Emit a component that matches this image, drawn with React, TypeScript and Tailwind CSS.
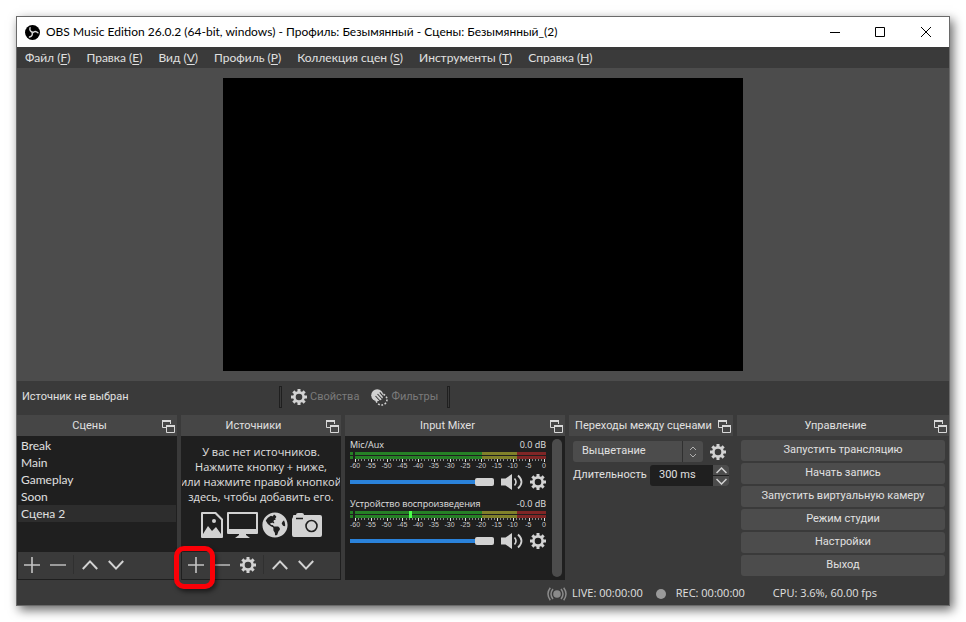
import { useState } from 'react';
import type { ReactNode } from 'react';
import { FaGlobeAmericas } from 'react-icons/fa';

const menu = [
  ['Файл', 'F'],
  ['Правка', 'E'],
  ['Вид', 'V'],
  ['Профиль', 'P'],
  ['Коллекция сцен', 'S'],
  ['Инструменты', 'T'],
  ['Справка', 'H'],
];

const scenes = ['Break', 'Main', 'Gameplay', 'Soon', 'Сцена 2'];

const controls = [
  'Запустить трансляцию',
  'Начать запись',
  'Запустить виртуальную камеру',
  'Режим студии',
  'Настройки',
  'Выход',
];

const decibels = [-60, -55, -50, -45, -40, -35, -30, -25, -20, -15, -10, -5, 0];

const ObsIcon = () => (
  <svg viewBox="0 0 16 16" className="size-[15px]" fill="none">
    <circle cx="8" cy="8" r="8" fill="black" />
    {[0, 120, 240].map((angle) => (
      <path
        key={angle}
        d="M8.200 7.600Q4.400 6.800 5.400 2.800"
        stroke="#d8d8d8"
        strokeWidth="1.500"
        strokeLinecap="round"
        transform={`rotate(${angle} 8 8)`}
      />
    ))}
  </svg>
);

const GearIcon = () => (
  <svg viewBox="0 0 16 16" className="size-4 shrink-0" fill="none" stroke="#d2d2d2">
    <circle cx="8" cy="8" r="4.6" strokeWidth="2.6" />
    {[0, 45, 90, 135, 180, 225, 270, 315].map((angle) => (
      <path key={angle} d="M8 0v3" strokeWidth="3" transform={`rotate(${angle} 8 8)`} />
    ))}
  </svg>
);

const PlusIcon = () => (
  <svg viewBox="0 0 16 16" className="size-4" stroke="#c4c4c4" strokeWidth="1.6">
    <path d="M8 0v16M0 8h16" />
  </svg>
);

const MinusIcon = () => (
  <svg viewBox="0 0 16 16" className="size-4" stroke="#b4b4b4" strokeWidth="1.6">
    <path d="M0 8h16" />
  </svg>
);

const UpIcon = () => (
  <svg viewBox="0 0 16 16" className="size-4" fill="none" stroke="#d2d2d2" strokeWidth="2">
    <path d="M.8 12 8 4.4l7.200 7.600" />
  </svg>
);

const DownIcon = () => (
  <svg viewBox="0 0 16 16" className="size-4" fill="none" stroke="#d2d2d2" strokeWidth="2">
    <path d="M.8 4 8 11.600 15.200 4" />
  </svg>
);

const FilterIcon = () => (
  <svg viewBox="0 0 17 17" className="size-[17px]" fill="none">
    <circle cx="6.200" cy="6.200" r="6" fill="#d2d2d2" />
    <circle cx="10.500" cy="10.500" r="5.500" stroke="#d2d2d2" strokeWidth="1.600" strokeDasharray="1.800 1.600" />
    <path d="m4.500 7 5.500 6M6.500 5l5.500 6M8.800 3.400l4.500 5.400" stroke="#3a3a3a" strokeWidth="1.100" />
  </svg>
);

const FloatIcon = () => (
  <svg viewBox="0 0 13 13" className="h-[13px] w-[13px]" fill="none" stroke="#d8d8d8">
    <path d="M4 7.500H.5v-7h8V4" />
    <path d="M0 1h9" strokeWidth="2" />
    <path d="M4.500 5.500h8v7h-8z" />
    <path d="M4 6h9" strokeWidth="2" />
  </svg>
);

const SpeakerIcon = () => (
  <svg viewBox="0 0 22 16" className="h-4 w-[22px]" fill="none" stroke="#d2d2d2">
    <path d="M0 4.500h4.500L11 0v16l-6.500-4.500H0z" fill="#d2d2d2" stroke="none" />
    <path d="M13.500 4.500q3 3.500 0 7" strokeWidth="1.600" />
    <path d="M17 1.500q7 6.500 0 13" strokeWidth="1.800" />
  </svg>
);

const ImageIcon = () => (
  <svg viewBox="0 0 22 26" className="h-[26px] w-[22px]">
    <path
      d="M1 0h14l7 7v18q0 1-1 1H1q-1 0-1-1V1q0-1 1-1zM2 2v20l5-8 4 5 4-4 5 7V8l-6-6z"
      fill="#d2d2d2"
      fillRule="evenodd"
    />
    <circle cx="13" cy="9" r="2" fill="#d2d2d2" />
  </svg>
);

const MonitorIcon = () => (
  <svg viewBox="0 0 31 26" className="h-[26px] w-[31px]" fill="#d2d2d2">
    <path d="M1 0h29q1 0 1 1v20q0 1-1 1H1q-1 0-1-1V1q0-1 1-1zm1 2v15h27V2z" fillRule="evenodd" />
    <path d="M12 21h7v2l4 3H8l4-3z" />
  </svg>
);

const CameraIcon = () => (
  <svg viewBox="0 0 30 24" className="h-6 w-[30px]">
    <path d="M1 4V3q0-1 1-1h2q0-2 2-2h4q2 0 2 2h16q2 0 2 2v18q0 2-2 2H2q-2 0-2-2V6z" fill="#d2d2d2" />
    <path d="M4 5.500h7" stroke="#1f1f1f" strokeWidth="1.500" />
    <circle cx="19.500" cy="13" r="5.500" fill="none" stroke="#1f1f1f" strokeWidth="1.600" />
  </svg>
);

const LiveIcon = () => (
  <svg viewBox="0 0 20 14" className="h-[14px] w-5" fill="none" stroke="#8a8a8a" strokeWidth="1.500">
    <circle cx="10" cy="7" r="3.800" fill="#8a8a8a" stroke="none" />
    <path d="M6 2q-4 5 0 10M14 2q4 5 0 10M3.300.8q-4.600 6.200 0 12.400M16.700.8q4.600 6.200 0 12.400" />
  </svg>
);

const Dock = ({ title, children }: { title: string; children: ReactNode }) => (
  <section className="flex min-w-0 flex-col">
    <header className="flex h-[21px] items-center bg-[#464646] pt-px pr-0.5">
      <h2 className="flex-1 text-center whitespace-nowrap">{title}</h2>
      <button aria-label={`Открепить: ${title}`}>
        <FloatIcon />
      </button>
    </header>
    {children}
  </section>
);

const ToolbarSeparator = () => <span className="h-[19px] w-px bg-[#303030]" />;

const Meter = ({ peak }: { peak?: number }) => (
  <div>
    <div className="relative flex h-[7px] flex-col gap-px">
      {[0, 1].map((channel) => (
        <div key={channel} className="flex h-[3px] gap-0.5">
          <span className="w-[3px] bg-[#268026]" />
          <span className="flex flex-1">
            <span className="grow-40 bg-[#268026]" />
            <span className="grow-11 bg-[#80802a]" />
            <span className="grow-9 bg-[#802626]" />
          </span>
        </div>
      ))}
      {peak !== undefined && (
        <span
          className="absolute inset-y-0 w-[3px] bg-[#4cff4c]"
          style={{ left: `${peak}%` }}
        />
      )}
    </div>
    <div className="flex h-[3px] items-start justify-between pl-[5px]">
      {Array.from({ length: 61 }, (_, i) => (
        <span key={i} className={i % 5 === 0 ? 'h-[3px] w-px bg-[#e0e0e0]' : 'h-0.5 w-px bg-[#8a8a8a]'} />
      ))}
    </div>
    <div className="flex h-2 justify-between pr-0.5 pl-[5px] font-['Liberation_Sans',sans-serif] text-[7px] leading-2 text-[#c8c8c8]">
      {decibels.map((db) => (
        <span key={db} className="flex w-0 justify-center">
          {db}
        </span>
      ))}
    </div>
  </div>
);

const Channel = ({ name, level, peak }: { name: string; level: string; peak?: number }) => {
  const [volume, setVolume] = useState(100);

  return (
    <div className="h-[59px]">
      <div className="flex h-[15px] items-center justify-between font-['Open_Sans',sans-serif] text-[9px] whitespace-nowrap">
        <span>{name}</span>
        <span>{level}</span>
      </div>
      <Meter peak={peak} />
      <div className="mt-1 flex h-4 items-center">
        <input
          type="range"
          aria-label={name}
          value={volume}
          onChange={(e) => setVolume(Number(e.target.value))}
          className="h-2 min-w-0 flex-1 appearance-none bg-linear-to-r from-[#2a82da] to-[#2a82da] bg-[length:100%_4px] bg-center bg-no-repeat [&::-webkit-slider-thumb]:h-2 [&::-webkit-slider-thumb]:w-[19px] [&::-webkit-slider-thumb]:appearance-none [&::-webkit-slider-thumb]:rounded-xs [&::-webkit-slider-thumb]:bg-[#d2d2d2]"
        />
        <button aria-label="Выключить звук" className="ml-[7px]">
          <SpeakerIcon />
        </button>
        <button aria-label="Настройки канала" className="ml-[7px]">
          <GearIcon />
        </button>
      </div>
    </div>
  );
};

const App = () => {
  const [scene, setScene] = useState('Сцена 2');

  return (
    <div className="flex h-screen min-h-[560px] flex-col bg-white p-4 font-['Roboto','Open_Sans',sans-serif] text-[11px] text-[#e0e0e0]">
      <div className="flex flex-1 flex-col border border-[#6a6a6a] bg-[#3a3a3a] shadow-[3px_4px_10px_rgba(0,0,0,0.6)]">
        <header className="flex h-[30px] items-center bg-white pl-2 font-['Lato',sans-serif] text-xs text-black">
          <ObsIcon />
          <h1 className="ml-1.5 flex-1 whitespace-nowrap">
            OBS Music Edition 26.0.2 (64-bit, windows) - Профиль: Безымянный - Сцены: Безымянный_(2)
          </h1>
          <button aria-label="Свернуть" className="flex h-full w-[45px] items-center justify-center">
            <svg viewBox="0 0 10 10" className="size-2.5" stroke="black">
              <path d="M0 5.500h10" />
            </svg>
          </button>
          <button aria-label="Развернуть" className="flex h-full w-[46px] items-center justify-center">
            <svg viewBox="0 0 10 10" className="size-2.5" fill="none" stroke="black">
              <path d="M.5.5h9v9h-9z" />
            </svg>
          </button>
          <button aria-label="Закрыть" className="flex h-full w-[46px] items-center justify-center">
            <svg viewBox="0 0 10 10" className="size-2.5" stroke="black">
              <path d="m0 0 10 10M10 0 0 10" />
            </svg>
          </button>
        </header>

        <nav className="flex h-[21px] items-center gap-4 pl-2 font-['Lato',sans-serif] text-xs">
          {menu.map(([label, key]) => (
            <button key={key} className="whitespace-nowrap">
              {label} (<span className="underline underline-offset-2">{key}</span>)
            </button>
          ))}
        </nav>

        <main className="flex min-h-0 flex-1 justify-center bg-[#4c4c4c] py-2.5">
          <div className="aspect-[520/293] bg-black" />
        </main>

        <div className="flex h-[34px] items-center pb-0.5 pl-[5px] text-[#7a7a7a]">
          <span className="w-[257px] text-[#e0e0e0]">Источник не выбран</span>
          <span className="h-[22px] w-[3px] border border-[#1f1f1f]" />
          <button className="ml-[9px] flex items-center gap-[3px]">
            <GearIcon />
            Свойства
          </button>
          <button className="ml-3 flex items-center gap-[3px]">
            <FilterIcon />
            Фильтры
          </button>
          <span className="ml-[9px] h-[22px] w-[3px] border border-[#1f1f1f]" />
        </div>

        <div className="grid h-[165px] grid-cols-[160fr_160fr_220fr_164fr_212fr] gap-1">
          <Dock title="Сцены">
            <div className="flex flex-1 flex-col border border-[#1f1f1f]">
              <ul className="flex-1 bg-[#1f1f1f] font-['Lato',sans-serif] text-xs leading-[17px]">
                {scenes.map((name) => (
                  <li key={name}>
                    <button
                      onClick={() => setScene(name)}
                      className={name === scene ? 'w-full bg-[#2d2d2d] pl-[3px] text-left' : 'w-full pl-[3px] text-left'}
                    >
                      {name}
                    </button>
                  </li>
                ))}
              </ul>
              <div className="flex h-[27px] items-center gap-2 pb-0.5 pl-1.5">
                <button aria-label="Добавить сцену" className="mr-0.5"><PlusIcon /></button>
                <button aria-label="Удалить сцену" className="mr-[-1px]"><MinusIcon /></button>
                <ToolbarSeparator />
                <button aria-label="Выше" className="mr-0.5"><UpIcon /></button>
                <button aria-label="Ниже"><DownIcon /></button>
              </div>
            </div>
          </Dock>

          <Dock title="Источники">
            <div className="flex flex-1 flex-col border border-[#1f1f1f]">
              <div className="flex flex-1 flex-col items-center overflow-hidden bg-[#1f1f1f] pt-[7px]">
                <p className="text-center font-['Open_Sans',sans-serif] leading-[15px] whitespace-nowrap">
                  У вас нет источников.<br />
                  Нажмите кнопку + ниже,<br />
                  или нажмите правой кнопкой<br />
                  здесь, чтобы добавить его.
                </p>
                <div className="mt-2 flex items-center gap-1">
                  <ImageIcon />
                  <MonitorIcon />
                  <FaGlobeAmericas className="size-[26px] text-[#d2d2d2]" />
                  <CameraIcon />
                </div>
              </div>
              <div className="flex h-[27px] items-center gap-2 pb-0.5 pl-1.5">
                <button aria-label="Добавить источник" className="relative z-10 mr-0.5">
                  <PlusIcon />
                  <span className="absolute -top-[11px] -right-[11px] -bottom-4 -left-[14px] rounded-[10px] border-[5px] border-[#fb0007] shadow-[2px_3px_4px_rgba(0,0,0,0.5)]" />
                </button>
                <button aria-label="Удалить источник" className="mr-0.5"><MinusIcon /></button>
                <button aria-label="Свойства источника" className="mr-[-1px]"><GearIcon /></button>
                <ToolbarSeparator />
                <button aria-label="Выше" className="mr-0.5"><UpIcon /></button>
                <button aria-label="Ниже"><DownIcon /></button>
              </div>
            </div>
          </Dock>

          <Dock title="Input Mixer">
            <div className="flex flex-1 gap-1.5 bg-[#1f1f1f] py-[3px] pr-[3px] pl-[5px]">
              <div className="-mt-[2px] min-w-0 flex-1">
                <Channel name="Mic/Aux" level="0.0 dB" />
                <Channel name="Устройство воспроизведения" level="-0.0 dB" peak={30} />
              </div>
              <span className="w-2.5 rounded-full bg-[#4c4c4c]" />
            </div>
          </Dock>

          <Dock title="Переходы между сценами">
            <div className="flex flex-col gap-[3px] px-1 pt-[5px]">
              <div className="flex items-center gap-[7px]">
                <div className="relative w-[130px]">
                  <select aria-label="Переход" className="h-[21px] w-full appearance-none rounded-[3px] bg-[#4c4c4c] pl-[9px]">
                    <option>Выцветание</option>
                  </select>
                  <span className="pointer-events-none absolute inset-y-0 right-0 flex w-[21px] items-center justify-center border-l border-[#303030]">
                    <svg viewBox="0 0 8 12" className="h-3 w-2" fill="none" stroke="#b0b0b0">
                      <path d="m1 4 3-3 3 3M1 8l3 3 3-3" />
                    </svg>
                  </span>
                </div>
                <button aria-label="Настройки перехода"><GearIcon /></button>
              </div>
              <div className="flex items-center">
                <label htmlFor="duration" className="w-[77px]">Длительность</label>
                <div className="flex h-[21px] w-[79px] overflow-hidden rounded-[3px] bg-[#1f1f1f]">
                  <input id="duration" defaultValue="300 ms" className="min-w-0 flex-1 pl-[9px]" />
                  <div className="flex w-4 flex-col gap-px">
                    <button aria-label="Больше" className="flex flex-1 items-center justify-center bg-[#4c4c4c]">
                      <svg viewBox="0 0 11 7" className="h-[7px] w-[11px]" fill="none" stroke="#d2d2d2" strokeWidth="1.500">
                        <path d="m.5 6 5-5 5 5" />
                      </svg>
                    </button>
                    <button aria-label="Меньше" className="flex flex-1 items-center justify-center bg-[#4c4c4c]">
                      <svg viewBox="0 0 11 7" className="h-[7px] w-[11px]" fill="none" stroke="#d2d2d2" strokeWidth="1.500">
                        <path d="m.5 1 5 5 5-5" />
                      </svg>
                    </button>
                  </div>
                </div>
              </div>
            </div>
          </Dock>

          <Dock title="Управление">
            <div className="flex flex-col gap-0.5 p-1">
              {controls.map((label) => (
                <button key={label} className="h-[21px] rounded-[3px] bg-[#4c4c4c] whitespace-nowrap">
                  {label}
                </button>
              ))}
            </div>
          </Dock>
        </div>

        <footer className="flex h-[25px] items-center justify-end pt-0.5 pr-[72px] font-['Open_Sans',sans-serif] whitespace-nowrap">
          <LiveIcon />
          <span className="ml-[5px]">LIVE: 00:00:00</span>
          <span className="ml-[13px] size-2.5 rounded-full bg-[#9a9a9a]" />
          <span className="ml-2.5">REC: 00:00:00</span>
          <span className="ml-7">CPU: 3.6%, 60.00 fps</span>
        </footer>
      </div>
    </div>
  );
};

export default App;
